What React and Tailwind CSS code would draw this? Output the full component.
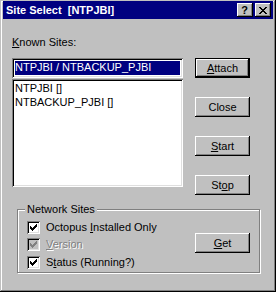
import React from "react";

const raised =
  "[box-shadow:inset_-1px_-1px_#000000,inset_1px_1px_#ffffff,inset_-2px_-2px_#808080,inset_2px_2px_#c0c0c0]";
const sunken =
  "[box-shadow:inset_1px_1px_#808080,inset_-1px_-1px_#ffffff,inset_2px_2px_#000000,inset_-2px_-2px_#dfdfdf]";

function Btn({ children, isDefault }) {
  return (
    <div
      className={
        "h-[20px] w-[55px] flex items-center justify-center bg-[#c0c0c0] " +
        (isDefault
          ? "border border-black [box-shadow:inset_-1px_-1px_#000000,inset_1px_1px_#ffffff,inset_-2px_-2px_#808080]"
          : raised)
      }
    >
      <span className="leading-[13px]">{children}</span>
    </div>
  );
}

function Check({ disabled }) {
  return (
    <div
      className={
        "w-[13px] h-[13px] flex items-center justify-center shrink-0 " +
        sunken +
        (disabled ? " bg-[#c0c0c0]" : " bg-white")
      }
    >
      <svg width="7" height="7" viewBox="0 0 7 7" shapeRendering="crispEdges">
        <path
          fill={disabled ? "#808080" : "#000000"}
          d="M6 0h1v1h-1z M5 1h2v1h-2z M0 2h1v1h-1z M4 2h3v1h-3z M0 3h2v1h-2z M3 3h3v1h-3z M0 4h5v1h-5z M1 5h3v1h-3z M2 6h1v1h-1z"
        />
      </svg>
    </div>
  );
}

export default function App() {
  return (
    <div className="w-[276px] h-[292px] bg-[#c0c0c0] flex flex-col pt-[1px] px-[3px] pb-[3px] font-['Liberation_Sans',Arial,sans-serif] text-[11px] leading-[13px] text-black [box-shadow:inset_-1px_-1px_#000000,inset_1px_1px_#c0c0c0,inset_-2px_-2px_#808080,inset_2px_2px_#ffffff]">
      {/* Title bar */}
      <div className="h-[18px] bg-[#000080] flex items-center pl-[3px] pr-[2px] shrink-0">
        <span className="text-white font-bold whitespace-pre flex-1">
          {"Site Select  [NTPJBI]"}
        </span>
        <div className="flex gap-[2px]">
          <div className={"w-[16px] h-[14px] bg-[#c0c0c0] flex items-center justify-center " + raised}>
            <span className="font-bold text-[11px] leading-[11px] pr-[1px]">?</span>
          </div>
          <div className={"w-[16px] h-[14px] bg-[#c0c0c0] flex items-center justify-center " + raised}>
            <svg width="8" height="7" viewBox="0 0 8 7" shapeRendering="crispEdges" className="mr-[1px]">
              <path
                fill="#000"
                d="M0 0h2v1h-2z M6 0h2v1h-2z M1 1h2v1h-2z M5 1h2v1h-2z M2 2h4v1h-4z M3 3h2v1h-2z M2 4h4v1h-4z M1 5h2v1h-2z M5 5h2v1h-2z M0 6h2v1h-2z M6 6h2v1h-2z"
              />
            </svg>
          </div>
        </div>
      </div>

      {/* Body */}
      <div className="flex flex-col pl-[9px] pt-[17px]">
        <div>
          <u>K</u>nown Sites:
        </div>
        <div className="flex items-start mt-[9px]">
          <div className="w-[171px] flex flex-col">
            <div className={"h-[20px] bg-white p-[3px] " + sunken}>
              <div className="h-[14px] bg-[#000080] text-white leading-[13px] whitespace-pre">
                NTPJBI / NTBACKUP_PJBI
              </div>
            </div>
            <div className={"h-[108px] mt-[1px] bg-white pl-[3px] pt-[2px] " + sunken}>
              <div className="leading-[14px]">NTPJBI []</div>
              <div className="leading-[14px]">NTBACKUP_PJBI []</div>
            </div>
          </div>
          <div className="ml-[12px] flex flex-col gap-[19px]">
            <Btn isDefault>
              <u>A</u>ttach
            </Btn>
            <Btn>Close</Btn>
            <Btn>
              <u>S</u>tart
            </Btn>
            <Btn>
              St<u>o</u>p
            </Btn>
          </div>
        </div>

        {/* Group box */}
        <div className="relative ml-[5px] mt-[14px] w-[243px] h-[64px] border border-[#808080] [box-shadow:inset_1px_1px_#ffffff,1px_1px_#ffffff] flex pl-[9px] pr-[9px]">
          <div className="absolute left-[7px] top-[-7px] px-[2px] bg-[#c0c0c0]">Network Sites</div>
          <div className="flex flex-col pt-[11px]">
            <div className="flex items-center h-[13px]">
              <Check />
              <span className="ml-[6px]">
                Octopus <u>I</u>nstalled Only
              </span>
            </div>
            <div className="flex items-center h-[13px] mt-[4px]">
              <Check disabled />
              <span className="ml-[6px] text-[#808080] [text-shadow:1px_1px_0_#ffffff]">
                <u>V</u>ersion
              </span>
            </div>
            <div className="flex items-center h-[13px] mt-[5px]">
              <Check />
              <span className="ml-[6px]">
                S<u>t</u>atus (Running?)
              </span>
            </div>
          </div>
          <div className="ml-auto mt-[23px]">
            <Btn>
              <u>G</u>et
            </Btn>
          </div>
        </div>
      </div>
    </div>
  );
}
